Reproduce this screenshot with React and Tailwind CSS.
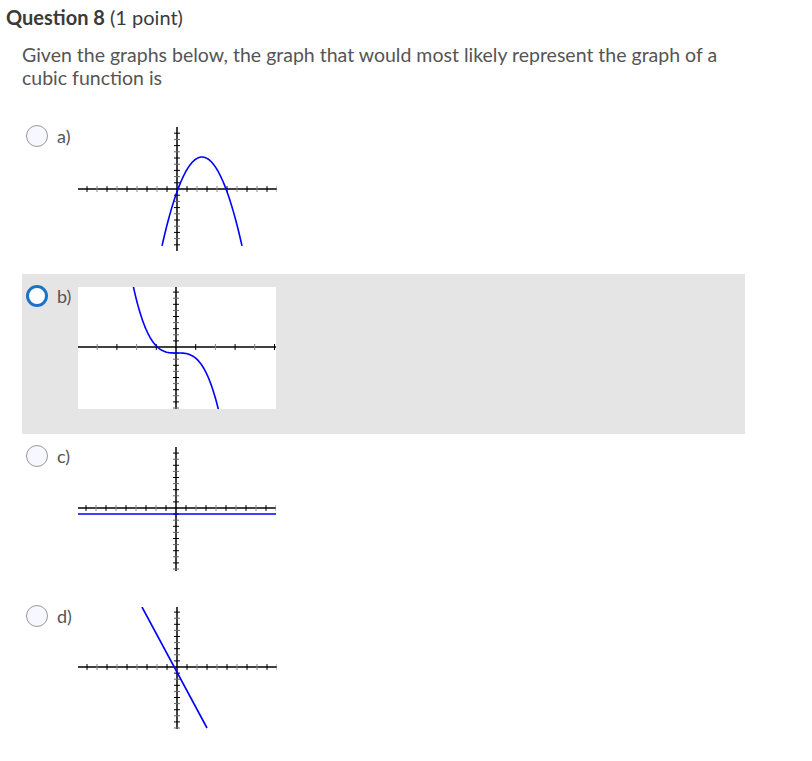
import React from "react";

// axes with tick marks, drawn in local svg coords
function Axes({ w, h, ox, oy, xStep, yStep }) {
  const ticks = [];
  let i = 0;
  for (let x = ox + xStep; x <= w; x += xStep, i++) ticks.push(<line key={"xr" + i} x1={x} x2={x} y1={oy - 3} y2={oy + 3} stroke={i % 2 ? "#888" : "#000"} strokeWidth="1" />);
  i = 0;
  for (let x = ox - xStep; x >= 0; x -= xStep, i++) ticks.push(<line key={"xl" + i} x1={x} x2={x} y1={oy - 3} y2={oy + 3} stroke={i % 2 ? "#888" : "#000"} strokeWidth="1" />);
  i = 0;
  for (let y = oy - yStep; y >= 0; y -= yStep, i++) ticks.push(<line key={"yu" + i} x1={ox - 3} x2={ox + 3} y1={y} y2={y} stroke={i % 2 ? "#666" : "#000"} strokeWidth="1" />);
  i = 0;
  for (let y = oy + yStep; y <= h; y += yStep, i++) ticks.push(<line key={"yd" + i} x1={ox - 3} x2={ox + 3} y1={y} y2={y} stroke={i % 2 ? "#666" : "#000"} strokeWidth="1" />);
  return (
    <g>
      <line x1="0" x2={w} y1={oy} y2={oy} stroke="#000" strokeWidth="1.5" />
      <line x1={ox} x2={ox} y1="0" y2={h} stroke="#000" strokeWidth="1.5" />
      {ticks}
    </g>
  );
}

function curve(fn, from, to) {
  let d = "";
  for (let x = from; x <= to; x += 1) {
    d += (d ? " L" : "M") + x.toFixed(1) + " " + fn(x).toFixed(2);
  }
  return d;
}

function GraphA() {
  const d = curve((x) => 30 + 32 * Math.pow((x - 124) / 24, 2), 84, 164);
  return (
    <svg width="199" height="124" className="bg-white">
      <Axes w={199} h={124} ox={99} oy={62} xStep={10} yStep={6.2} />
      <path d={d} fill="none" stroke="#0000ff" strokeWidth="1.6" />
    </svg>
  );
}

function GraphB() {
  const d = curve((x) => 66 + 0.000798 * Math.pow(x - 99, 3), 54, 141);
  return (
    <svg width="198" height="122" className="bg-white">
      <defs>
        <clipPath id="cb">
          <rect x="0" y="0" width="198" height="122" />
        </clipPath>
      </defs>
      <Axes w={198} h={122} ox={98} oy={60} xStep={19.7} yStep={6.1} />
      <path d={d} fill="none" stroke="#0000ff" strokeWidth="1.6" clipPath="url(#cb)" />
    </svg>
  );
}

function GraphC() {
  return (
    <svg width="198" height="124" className="bg-white">
      <Axes w={198} h={124} ox={98} oy={61} xStep={10} yStep={6.1} />
      <line x1="0" x2="198" y1="67" y2="67" stroke="#0000ff" strokeWidth="1.6" />
    </svg>
  );
}

function GraphD() {
  return (
    <svg width="199" height="122" className="bg-white">
      <Axes w={199} h={122} ox={99} oy={60} xStep={10} yStep={6.1} />
      <line x1="64" y1="0" x2="129" y2="121" stroke="#0000ff" strokeWidth="1.6" />
    </svg>
  );
}

const answers = [
  { label: "a)", graph: <GraphA />, selected: false },
  { label: "b)", graph: <GraphB />, selected: true },
  { label: "c)", graph: <GraphC />, selected: false },
  { label: "d)", graph: <GraphD />, selected: false },
];

export default function App() {
  return (
    <div className="bg-white min-h-screen w-[812px] text-[#555]" style={{ fontFamily: "Lato, 'Open Sans', sans-serif" }}>
      <h2 className="pl-[6px] pt-[5px] text-[20px] leading-[24px] text-[#3a3a3a]">
        <span className="font-bold">Question 8</span> (1 point)
      </h2>
      <div className="pl-[22px] mt-[14px] w-[745px] text-[19.5px] leading-[23px]">
        Given the graphs below, the graph that would most likely represent the graph of a cubic function is
      </div>
      <div className="mt-[25px] w-[723px] ml-[22px]">
        {answers.map((a) => (
          <div key={a.label} className={"h-[160px] pt-[11px] flex " + (a.selected ? "bg-[#e5e5e5]" : "")}>
            <div
              className={
                "ml-1 w-[22px] h-[22px] rounded-full shrink-0 " +
                (a.selected ? "border-[3px] border-[#1a73c8] bg-white" : "border border-[#999] bg-[#f7f8ff]")
              }
            />
            <div className="ml-[9px] w-[21px] text-[18px] leading-[22px]">{a.label}</div>
            <div className="mt-[2px]">{a.graph}</div>
          </div>
        ))}
      </div>
    </div>
  );
}
